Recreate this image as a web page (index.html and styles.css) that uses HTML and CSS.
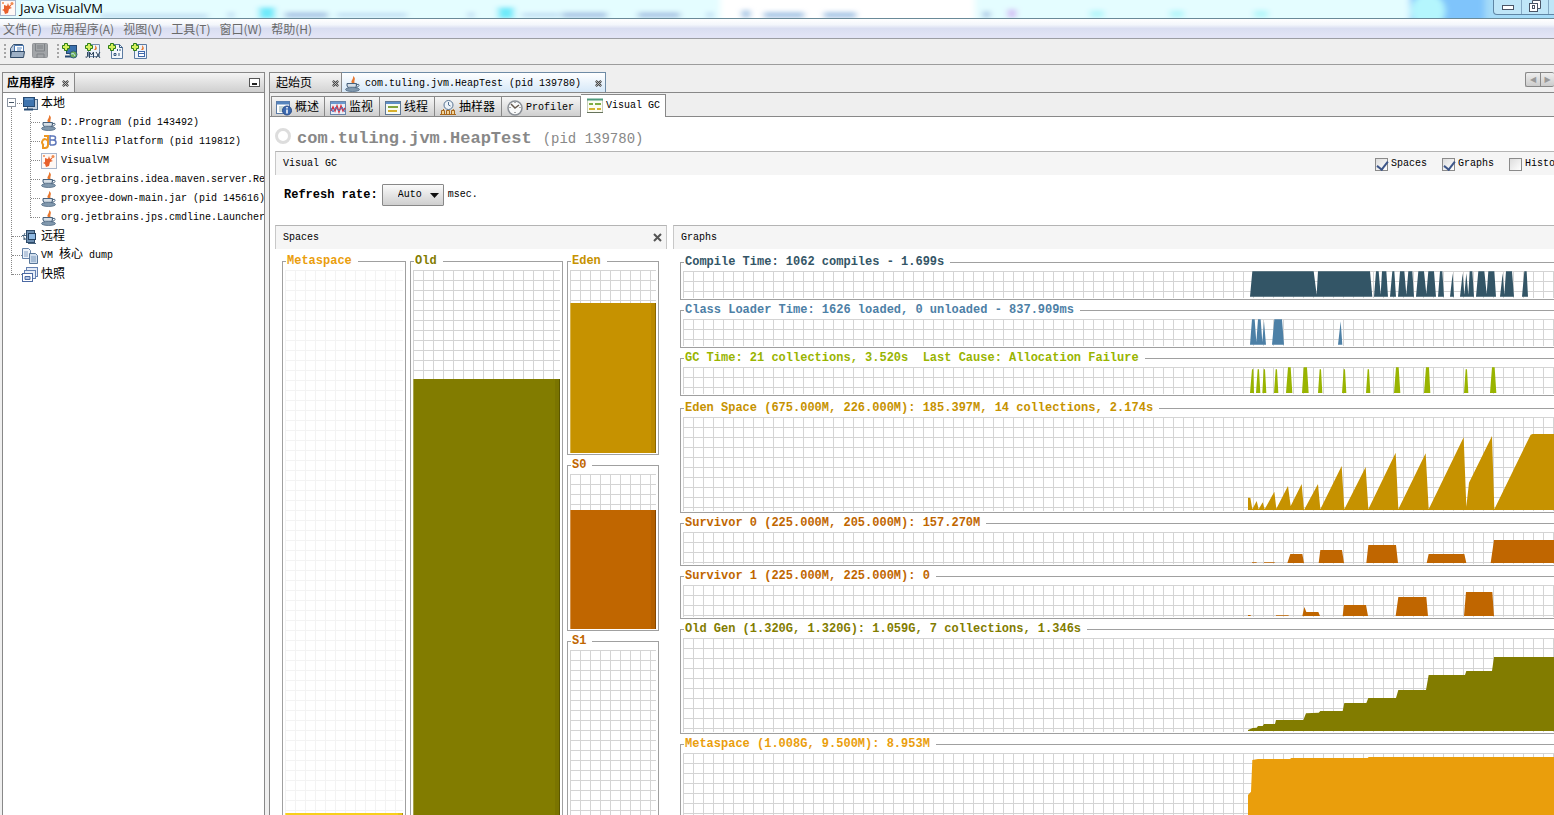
FILE: index.html
```html
<!DOCTYPE html>
<html lang="zh-CN">
<head>
<meta charset="utf-8">
<title>Java VisualVM</title>
<link rel="stylesheet" href="styles.css">
</head>
<body>
<svg class="defs" width="0" height="0" aria-hidden="true">
  <symbol id="java" viewBox="0 0 16 16">
    <path d="M8 8C4 5 9 4 8 0c4 3 0 4 2 8z" fill="#e8772e"/>
    <path d="M2 7.500h9.500v2.500q-1 3-4.700 3T2 10z" fill="#b9c6d2" stroke="#47617c"/>
    <path d="M11.500 8.500q3-.8 2.500 1t-3.500 2" fill="none" stroke="#47617c"/>
    <ellipse cx="7.500" cy="13.500" rx="7" ry="2" fill="#8299ae" stroke="#47617c" stroke-width=".7"/>
    <path d="M3 9h7" stroke="#f4f7fa"/>
  </symbol>
  <symbol id="vvm" viewBox="0 0 16 16">
    <rect x=".5" y=".5" width="15" height="15" fill="#fff8f4" stroke="#a9b6cc"/>
    <path d="M4 5l3 1 1-3 1 3 4-3-3 4 2 1-3 1-1 4-3 1-1-3-2-1 2-1z" fill="#e8602c"/>
    <circle cx="12" cy="3.500" r="1.500" fill="#ef8b50"/><circle cx="3" cy="3" r="1" fill="#ef8b50"/>
  </symbol>
  <symbol id="plus" viewBox="0 0 8 8">
    <path d="M2.500.5h3v2h2v3h-2v2h-3v-2h-2v-3h2z" fill="#d4f05c" stroke="#2d7d17"/>
  </symbol>
  <symbol id="close" viewBox="0 0 8 8">
    <path d="M1 1l6 6M7 1L1 7" stroke="#444" stroke-width="2.600"/><path d="M1 1l6 6M7 1L1 7" stroke="#ddd" stroke-width=".8"/>
  </symbol>
</svg>

<div class="app">
  <header class="titlebar">
    <svg class="glass" aria-hidden="true">
      <defs><filter id="soft" x="-20%" y="-80%" width="140%" height="260%"><feGaussianBlur stdDeviation="3 2"/></filter></defs>
      <rect width="1554" height="18" fill="#fff"/>
      <g filter="url(#soft)">
        <rect x="-10" y="-8" width="730" height="30" fill="#e4fdff"/>
        <rect x="975" y="-8" width="470" height="30" fill="#e4fdff"/>
        <rect x="1410" y="-8" width="90" height="30" fill="#7fc4fb"/>
        <circle cx="1428" cy="11" r="17" fill="#b4f6fd"/>
        <rect x="1485" y="-8" width="100" height="36" fill="#a6dcf8"/>
        <path d="M259 7h16v12h-16zM498 7h16v12h-16z" fill="#6feafa"/>
        <path d="M285 12h43v6h-43zM562 12h45v6h-45zM638 12h42v6h-42zM764 12h40v6h-40zM824 12h32v6h-32zM742 10h8v8h-8zM983 11h7v7h-7z" fill="#aac8e6"/>
        <path d="M100 14h108v4H100zM337 13h70v4h-70zM522 13h38v4h-38zM228 12h6v6h-6zM468 12h6v6h-6zM707 12h6v6h-6z" fill="#bddcf3"/>
        <path d="M1008 9h8v9h-8z" fill="#d3bdf5"/>
        <path d="M1090 10h14v8h-14zM1170 10h14v8h-14zM1254 10h14v8h-14z" fill="#b8f7fb"/>
      </g>
    </svg>
    <svg class="logo" width="16" height="16" aria-hidden="true"><use href="#vvm"/></svg>
    <h1>Java VisualVM</h1>
    <div class="winbtns">
      <button type="button" aria-label="最小化"><svg width="14" height="8"><rect x="1.500" y="3.500" width="11" height="4" fill="#fff" stroke="#4a5566"/></svg></button>
      <button type="button" aria-label="还原"><svg width="12" height="12"><path d="M3.500 3.500v-3h8v8h-3" fill="#fff" stroke="#4a5566"/><rect x=".5" y="3.500" width="8" height="8" fill="#fff" stroke="#4a5566"/><rect x="3.500" y="5.500" width="2" height="3" fill="none" stroke="#4a5566"/></svg></button>
      <button type="button" aria-label="关闭"></button>
    </div>
  </header>

  <nav class="menubar">
    <button type="button">文件(F)</button><button type="button">应用程序(A)</button><button type="button">视图(V)</button><button type="button">工具(T)</button><button type="button">窗口(W)</button><button type="button">帮助(H)</button>
  </nav>

  <div class="toolbar">
    <i class="grip"></i>
    <button type="button" aria-label="打开"><svg width="16" height="16"><path d="M1.500 14.500v-9l3-4h9v5" fill="#b8c8dc" stroke="#35506f"/><path d="M5.500 2.500h9v7h-9z" fill="#fff" stroke="#4a76ad"/><path d="M8 5h5M8 7h4" stroke="#5a8ac4"/><path d="M1.500 14.500l1-6h13l-1 6z" fill="#9db0c6" stroke="#2f4865"/></svg></button>
    <button type="button" class="save" aria-label="保存"><svg width="16" height="16"><rect x=".5" y=".5" width="15" height="14" rx="1" fill="#a2a5a8" stroke="#929598"/><path d="M3.500 1v7h9V1M5 3h6M5 5h6M5 15v-4h7v4" fill="none" stroke="#7e8286"/></svg></button>
    <i class="grip"></i>
    <button type="button" aria-label="添加远程主机"><svg width="16" height="16"><rect x="4.500" y="2.500" width="10" height="8" fill="#3a70ad" stroke="#24466f"/><path d="M3 13.500h8" stroke="#24466f" stroke-width="2"/><circle cx="11.500" cy="11.500" r="3.500" fill="#6fae58" stroke="#2c5d80"/><path d="M9 11q3-2 4 2" stroke="#bfe3f7" fill="none"/><use href="#plus" width="8" height="8"/></svg></button>
    <button type="button" aria-label="添加 JMX 连接"><svg width="16" height="16"><path d="M3.500 1.500h11v12h-11z" fill="#eef4fa" stroke="#7790ad"/><path d="M9 7q2-2 1-5 3 3 1 5" fill="#e8772e"/><path d="M2.500 9v4q0 2-2 1M4.500 15V9l2 3 2-3v6M11 9l4 6M15 9l-4 6" fill="none" stroke="#30475f"/><use href="#plus" width="8" height="8"/></svg></button>
    <button type="button" aria-label="添加 VM 核心 dump"><svg width="16" height="16"><path d="M3.500 1.500h8l3 3v11h-11z" fill="#f4f8fc" stroke="#5b7ba1"/><path d="M11.500 1.500v3h3M6 12.500v-2h2v2zM11 10v3M9.500 6v2M12 6v2" fill="none" stroke="#36597f"/><use href="#plus" width="8" height="8"/></svg></button>
    <button type="button" aria-label="添加快照"><svg width="16" height="16"><path d="M3.500 1.500h12v14h-12z" fill="#eef3fa" stroke="#5b7ba1"/><path d="M10 7q2-2 1-5 3 3 1 5" fill="#e8772e"/><rect x="7.500" y="8.500" width="6" height="5" fill="#fff" stroke="#3f69ab"/><path d="M8 10.500h5" stroke="#3f69ab"/><use href="#plus" width="8" height="8"/></svg></button>
  </div>

  <div class="workspace">
    <aside class="explorer">
      <div class="explorer-head">
        <div class="explorer-tab"><span class="zh">应用程序</span><svg width="7" height="7"><use href="#close"/></svg></div>
        <button type="button" class="minimize" aria-label="最小化窗口"><svg width="11" height="9"><rect x=".5" y=".5" width="10" height="8" fill="#fff" stroke="#555"/><path d="M3 6h5" stroke="#222" stroke-width="2"/></svg></button>
      </div>
      <ul class="tree">
        <li>
          <div class="row root"><i class="expander"></i><svg width="16" height="16"><rect x="5.500" y="3.500" width="10" height="10" fill="#c5d2e0" stroke="#4a6684"/><rect x="1.500" y="1.500" width="11" height="9" fill="#3f74ae" stroke="#264a72"/><path d="M3 3h8" stroke="#89b5df"/><path d="M2 13.500h9" stroke="#264a72" stroke-width="2"/></svg><span class="zh">本地</span></div>
          <ul class="children">
            <li class="row"><svg width="16" height="16"><use href="#java"/></svg>D:.Program (pid 143492)</li>
            <li class="row"><svg width="16" height="16"><path d="M3 2h4v9q0 3-3 3H2v-3M7 9a3 3 0 1 0-4 2" fill="none" stroke="#ed9722" stroke-width="2"/><path d="M9 1v10M9 2h3q2.500 0 2.500 2T12 6H9h3q3 0 3 2.500T12 11H9" fill="none" stroke="#5f78bb" stroke-width="1.500"/></svg>IntelliJ Platform (pid 119812)</li>
            <li class="row"><svg width="16" height="16"><use href="#vvm"/></svg>VisualVM</li>
            <li class="row"><svg width="16" height="16"><use href="#java"/></svg>org.jetbrains.idea.maven.server.Re</li>
            <li class="row"><svg width="16" height="16"><use href="#java"/></svg>proxyee-down-main.jar (pid 145616)</li>
            <li class="row"><svg width="16" height="16"><use href="#java"/></svg>org.jetbrains.jps.cmdline.Launcher</li>
          </ul>
        </li>
        <li class="row root"><svg width="16" height="16"><rect x="4.500" y="1.500" width="8" height="12" fill="#6d8eb0" stroke="#2e4b69"/><rect x="6.500" y="4.500" width="7" height="6" fill="#8fb9e2" stroke="#23405f"/><path d="M0 6.500h4M1 10h4M3 4q-3 3 0 7M6 14.500h8" fill="none" stroke="#49657f"/></svg><span class="zh">远程</span></li>
        <li class="row root"><svg width="16" height="16"><path d="M.5.5h6l2 2v8h-8z" fill="#edf3fa" stroke="#6582a8"/><path d="M2 4h4M2 6h4M2 8h4" stroke="#86a0c2"/><path d="M7.500 5.500h6l2 2v8h-8z" fill="#cfdded" stroke="#587699"/><path d="M9 9h5M9 11h5M9 13h5" stroke="#7d9abc"/></svg><span>VM <span class="zh">核心</span> dump</span></li>
        <li class="row root"><svg width="16" height="16"><rect x="4.500" y=".5" width="11" height="9" fill="#e6edf8" stroke="#6581b2"/><rect x="2.500" y="3.500" width="11" height="8" fill="#e6edf8" stroke="#6581b2"/><rect x=".5" y="6.500" width="10" height="8" fill="#fff" stroke="#4b69a3"/><path d="M3 9.500h5v3H3z" fill="#b5c7e6" stroke="#4b69a3"/></svg><span class="zh">快照</span></li>
      </ul>
    </aside>

    <main class="editor">
      <div class="doc-tabs">
        <div class="doc-tab"><span class="zh">起始页</span><svg width="7" height="7"><use href="#close"/></svg></div>
        <div class="doc-tab current"><svg width="16" height="16"><use href="#java"/></svg><span class="name">com.tuling.jvm.HeapTest (pid 139780)</span><svg width="7" height="7"><use href="#close"/></svg></div>
        <div class="tab-scroll"><button type="button" aria-label="向左">◀</button><button type="button" aria-label="向右">▶</button></div>
      </div>
      <nav class="sub-tabs">
        <button type="button"><svg width="16" height="16"><rect x=".5" y="1.500" width="13" height="12" fill="#fff" stroke="#5a7aa5"/><path d="M1 3h12" stroke="#5584bd" stroke-width="3"/><path d="M3 7h5M3 9h4M3 11h4" stroke="#8aa"/><circle cx="11" cy="10.500" r="4.500" fill="#3b69b0" stroke="#294c88"/><path d="M11 7v1.500M11 9.500v4" stroke="#fff" stroke-width="1.500"/></svg><span class="zh">概述</span></button>
        <button type="button"><svg width="16" height="16"><rect x=".5" y="1.500" width="15" height="13" fill="#e8eef7" stroke="#6983a8"/><path d="M1 3h14" stroke="#6c99cf" stroke-width="2"/><path d="M1 11l2-4 2 4 2-5 2 6 2-6 2 5 2-3" fill="none" stroke="#d83542" stroke-width="1.500"/><path d="M1 8l2 4 3-5 3 4 3-4 3 5" fill="none" stroke="#4c72bd"/></svg><span class="zh">监视</span></button>
        <button type="button"><svg width="16" height="16"><rect x=".5" y="1.500" width="15" height="13" fill="#f7faf2" stroke="#5f7794"/><path d="M1 3h14" stroke="#5e8fc8" stroke-width="2"/><path d="M3 7h10" stroke="#80a43d" stroke-width="2"/><path d="M3 11h9" stroke="#d7af2b" stroke-width="2"/></svg><span class="zh">线程</span></button>
        <button type="button"><svg width="16" height="16"><circle cx="8.500" cy="5" r="4.500" fill="#edf3f9" stroke="#587392"/><path d="M8.500 2v3l2 1" fill="none" stroke="#587392"/><path d="M1.500 14.500v-4h3v4zM6.500 14.500v-4h3v4zM11.500 14.500v-4h3v4zM0 14.500h16M4 9l-2 2M13 9l1 2" fill="#f6d394" stroke="#a8681c"/></svg><span class="zh">抽样器</span></button>
        <button type="button"><svg width="16" height="16"><circle cx="8" cy="8" r="7" fill="#f9fafb" stroke="#8a8f96" stroke-width="1.500"/><path d="M4 4l4 4 4-3" fill="none" stroke="#66594d" stroke-width="1.500"/><path d="M8 2v1M8 12v1M2.500 7.500h1M12.500 7.500h1" stroke="#555"/></svg>Profiler</button>
        <button type="button" class="current"><svg width="16" height="16"><rect x=".5" y="1.500" width="15" height="13" fill="#fdfdf2" stroke="#c6ccbc"/><path d="M0 1.500h16" stroke="#4d9a7c" stroke-width="2"/><path d="M2 6h4M8 6h6" stroke="#7fae43" stroke-width="2"/><path d="M2 11h6M10 11h4" stroke="#d4b52e" stroke-width="2"/><path d="M0 14.500h16" stroke="#66735c"/></svg>Visual GC</button>
      </nav>

      <div class="content">
        <h2 class="heading"><i class="ring"></i><b>com.tuling.jvm.HeapTest</b><span class="pid">(pid 139780)</span></h2>
        <div class="bar options"><span>Visual GC</span>
          <label><input type="checkbox" checked>Spaces</label><label><input type="checkbox" checked>Graphs</label><label><input type="checkbox">Histogram</label>
        </div>
        <div class="refresh">
          <label for="rate">Refresh rate:</label>
          <span class="pick"><select id="rate"><option>Auto</option><option>100</option><option>200</option><option>500</option></select><svg width="9" height="5" aria-hidden="true"><path d="M0 0h9L4.500 5z" fill="#111"/></svg></span>
          <span>msec.</span>
        </div>

        <div class="panels">
          <section class="panel spaces">
            <div class="bar"><span>Spaces</span><button type="button" class="bar-close" aria-label="关闭"><svg width="9" height="9"><path d="M1 1l7 7M8 1L1 8" stroke="#555" stroke-width="2"/></svg></button></div>
            <div class="space-cols">
              <fieldset class="chart meta faint"><legend>Metaspace</legend><div class="plot grow"><div class="fill"></div></div></fieldset>
              <fieldset class="chart old"><legend>Old</legend><div class="plot grow"><div class="fill"></div></div></fieldset>
              <div class="young">
                <fieldset class="chart eden"><legend>Eden</legend><div class="plot"><div class="fill"></div></div></fieldset>
                <fieldset class="chart surv"><legend>S0</legend><div class="plot"><div class="fill"></div></div></fieldset>
                <fieldset class="chart surv last"><legend>S1</legend><div class="plot grow"></div></fieldset>
              </div>
            </div>
          </section>

          <section class="panel graphs">
            <div class="bar"><span>Graphs</span></div>
            <div class="graph-list">
              <fieldset class="chart compile"><legend>Compile Time: 1062 compiles - 1.699s</legend><div class="plot small"><svg><g transform="translate(547 -21) scale(.33333)"><path d="M60 140L67 64H251L260 134L264 64H420L427 140zM432 140L438 64H446L452 134L456 64H469L474 140zM480 140L487 64H493L498 140zM504 140L510 64H523L529 134L535 64H547L552 140zM558 140L565 64H582L589 132L595 64H612L618 140zM624 140L630 64H637L642 140zM660 140L668 70L672 140zM690 140L698 70L703 134L709 70L715 134L719 64H727L732 140zM738 140L745 64H763L770 132L775 64H793L798 140zM810 140L818 70L823 134L828 64H846L852 140zM876 140L883 64H890L894 140z"/></g></svg></div></fieldset>
              <fieldset class="chart loader"><legend>Class Loader Time: 1626 loaded, 0 unloaded - 837.909ms</legend><div class="plot small"><svg><g transform="translate(547 -69) scale(.33333)"><path d="M60 284L66 208H74L79 276L84 208H92L97 276L102 214L108 284zM126 284L133 208H156L162 284zM324 284L332 214L337 284z"/></g></svg></div></fieldset>
              <fieldset class="chart gc"><legend>GC Time: 21 collections, 3.520s&nbsp; Last Cause: Allocation Failure</legend><div class="plot small"><svg><g transform="translate(547 -117) scale(.33333)"><path d="M60 429L66 358H70L72 429zM78 429L83 358H87L91 429zM97 429L101 358H105L109 429zM132 429L137 358H141L145 429zM168 429L174 352H182L187 429zM216 429L221 352H231L236 429zM264 429L269 358H273L277 429zM336 429L341 358H345L349 429zM408 429L413 358H417L421 429zM492 429L498 352H506L511 429zM582 429L588 352H597L601 429zM702 429L707 358H711L715 429zM780 429L786 352H794L799 429z"/></g></svg></div></fieldset>
              <fieldset class="chart eden wide-gap"><legend>Eden Space (675.000M, 226.000M): 185.397M, 14 collections, 2.174s</legend><div class="plot large"><svg><g transform="translate(547 -17) scale(.33333)"><path d="M54 330V293H61L67 328L80 303L86 328L98 307L104 328L133 275L139 326L174 258L182 318L215 252L222 330L264 252L271 328L335 198L343 328L407 201L415 328L497 158L505 328L587 160L596 328L701 112L709 320L717 248L786 108L793 328L902 104L908 102H1500V330z"/></g></svg></div></fieldset>
              <fieldset class="chart surv"><legend>Survivor 0 (225.000M, 205.000M): 157.270M</legend><div class="plot medium"><svg><g transform="translate(547 -132) scale(.33333)"><path d="M66 489v-2h14v2zM102 489v-2h32v2zM172 489L181 462H217L222 489zM266 489L271 450H336L342 489zM409 489L415 435H498L504 489zM590 489L596 462H703L709 489zM782 489L792 420H1500V489z"/></g></svg></div></fieldset>
              <fieldset class="chart surv"><legend>Survivor 1 (225.000M, 225.000M): 0</legend><div class="plot medium"><svg><g transform="translate(547 -185) scale(.33333)"><path d="M54 648v-3h8v3zM138 648v-2h38v2zM217 648L223 621L229 636H265L270 648zM338 648L342 615H408L414 648zM497 648L505 591H589L594 648zM702 648L708 576H787L792 648z"/></g></svg></div></fieldset>
              <fieldset class="chart old"><legend>Old Gen (1.320G, 1.320G): 1.059G, 7 collections, 1.346s</legend><div class="plot large"><svg><g transform="translate(547 -18) scale(.33333)"><path d="M54 333V330L68 324L80 323L84 318H98L102 312H135L138 300H220L228 280L266 278L271 273H338L343 249H409L415 234H498L505 210H588L596 165H705L709 153H786L792 111H1500V333z"/></g></svg></div></fieldset>
              <fieldset class="chart meta"><legend>Metaspace (1.008G, 9.500M): 8.953M</legend><div class="plot large"><svg><g transform="translate(547 -133) scale(.33333)"><path d="M54 700V525L63 515L67 420L84 417H180L184 414H413L416 411H1500V700z"/></g></svg></div></fieldset>
            </div>
          </section>
        </div>
      </div>
    </main>
  </div>
</div>
</body>
</html>
```
FILE: styles.css
```css
* { box-sizing: border-box; }
html, body { margin: 0; height: 100%; overflow: hidden; }
body {
  font: 10px/14px "Liberation Mono", "Noto Sans CJK SC", monospace;
  color: #000;
  background: #efefef;
}
button { margin: 0; padding: 0; border: 0; background: none; font: inherit; color: inherit; }
svg { display: block; flex: none; }
ul { list-style: none; margin: 0; padding: 0; }
h1, h2 { margin: 0; }
.defs { position: absolute; }
.zh { font-size: 12px; }
.app { height: 100vh; display: flex; flex-direction: column; overflow: hidden; }

.titlebar {
  position: relative; display: flex; align-items: flex-start; flex: none;
  height: 19px; overflow: hidden; background: #a6d6f5; border-bottom: 1px solid #6a8a98;
}
.glass { position: absolute; inset: 0; width: 100%; height: 18px; }
.logo { position: relative; margin-right: 4px; }
.titlebar h1 { position: relative; font: 13px/16px "Open Sans", "Noto Sans", sans-serif; }
.winbtns {
  position: relative; display: flex; margin-left: auto; margin-right: -22px; height: 15px;
  border: 1px solid #5f86a5; border-top: 0; border-radius: 0 0 4px 4px; background: #bfe6f8;
}
.winbtns button { width: 27px; display: flex; align-items: center; justify-content: center; padding-bottom: 3px; }
.winbtns button + button { border-left: 1px solid #84a9c4; }

.menubar {
  display: flex; gap: 9px; flex: none; height: 20px; padding-left: 3px;
  background: linear-gradient(#fff, #f3f6fb 30%, #d9def1 50%, #e2e4f6 90%);
  border-bottom: 1px solid #9b9da3;
  font: 12px/19px "Noto Sans CJK SC", sans-serif; color: #6a6a6a;
}

.toolbar { display: flex; align-items: center; gap: 7px; flex: none; height: 26px; padding: 0 0 2px 4px; border-bottom: 1px solid #9c9c9c; background: #efefef; }
.grip { width: 2px; height: 14px; margin-right: -4px; background: repeating-linear-gradient(#a5a5a5 0 2px, transparent 2px 4px); }
.save + .grip { margin-left: 2px; }

.workspace { flex: 1; min-height: 0; display: flex; gap: 4px; padding: 7px 0 0 2px; }

.explorer { width: 263px; flex: none; display: flex; flex-direction: column; overflow: hidden; background: #fff; border: 1px solid #888; border-bottom: 0; }
.explorer-head { display: flex; align-items: center; justify-content: space-between; height: 20px; flex: none; border-bottom: 1px solid #888; background: linear-gradient(#f4f4f4, #cfcfcf); }
.explorer-tab { display: flex; align-items: center; gap: 7px; height: 19px; padding: 2px 5px 0 4px; border-right: 1px solid #888; background: #efefef; font-weight: 700; }
.minimize { margin-right: 4px; }

.row { position: relative; display: flex; align-items: center; gap: 4px; height: 19px; white-space: nowrap; }
.root { padding-left: 19px; gap: 3px; }
.root::before { content: ""; position: absolute; left: 9px; top: 9px; width: 10px; border-top: 1px dotted #888; }
.tree { position: relative; padding-top: 1px; }
.tree::before { content: ""; position: absolute; left: 8px; top: 14px; bottom: 9px; border-left: 1px dotted #888; }
.expander { position: absolute; z-index: 1; left: 4px; top: 4px; width: 9px; height: 9px; border: 1px solid #8d96a3; background: linear-gradient(#456, #456) center / 5px 1px no-repeat #fff; }
.children { position: relative; padding-left: 38px; }
.children::before { content: ""; position: absolute; left: 27px; top: 0; bottom: 9px; border-left: 1px dotted #888; }
.children .row::before { content: ""; position: absolute; left: -10px; top: 9px; width: 9px; border-top: 1px dotted #888; }

.editor { flex: 1; min-width: 0; display: flex; flex-direction: column; border-left: 1px solid #888; }
.doc-tabs { display: flex; flex: none; height: 21px; border-bottom: 1px solid #888; }
.doc-tab { display: flex; align-items: center; height: 20px; width: 72px; padding: 2px 2px 0 6px; justify-content: space-between; border: 1px solid #888; border-left: 0; border-bottom: 0; background: linear-gradient(#f6f6f6, #d4d4d4); }
.doc-tab.current { width: 264px; padding: 2px 3px 0; justify-content: flex-start; gap: 4px; background: linear-gradient(#fff, #d6e8f8); border-color: #6e8ba5; }
.doc-tab .name { flex: 1; white-space: nowrap; }
.tab-scroll { display: flex; margin-left: auto; height: 15px; border: 1px solid #888; border-right: 0; border-radius: 2px; background: linear-gradient(#eee, #ccc); color: #999; }
.tab-scroll button { width: 14px; font: 8px/13px "DejaVu Sans", sans-serif; }
.tab-scroll button + button { border-left: 1px solid #888; }

.sub-tabs { display: flex; align-items: flex-end; flex: none; height: 24px; border-bottom: 1px solid #888; padding-left: 1px; }
.sub-tabs button { display: flex; align-items: center; gap: 3px; height: 20px; padding: 2px 6px 0 5px; border: 1px solid #888; border-left: 0; border-bottom: 0; background: linear-gradient(#f6f6f6, #cfcfcf); }
.sub-tabs button:first-child { border-left: 1px solid #888; padding: 2px 5px 0 4px; }
.sub-tabs button.current { height: 23px; margin-bottom: -1px; background: #fff; padding: 0 5px 1px 6px; }

.content { flex: 1; min-height: 0; display: flex; flex-direction: column; background: #fff; padding-left: 5px; overflow: hidden; }
.heading { display: flex; align-items: center; flex: none; height: 34px; padding-top: 9px; color: #888; font-size: 17px; line-height: 20px; font-weight: 400; white-space: nowrap; }
.ring { width: 16px; height: 16px; border: 3px solid #ddd; border-radius: 50%; margin: 0 6px 6px 0; }
.pid { font-size: 14px; margin-left: 11px; }

.bar { display: flex; align-items: center; flex: none; height: 24px; padding-left: 7px; background: #f5f5f5; border-top: 1px solid #b4b4b4; border-left: 1px solid #c8c8c8; }
.options { margin-right: -32px; gap: 15px; padding-top: 1px; }
.options > span { margin-right: auto; }
.options label { display: flex; align-items: center; gap: 3px; }
.options label:last-child { padding-right: 7px; }
.options input {
  appearance: none; width: 13px; height: 13px; margin: 0; border: 1px solid #8a8a8a; background: linear-gradient(135deg, #ddd, #fff); position: relative;
}
.options input:checked::after { content: ""; position: absolute; left: 3px; top: 0; width: 5px; height: 9px; border: solid #3d5689; border-width: 0 2px 2px 0; transform: rotate(38deg); }

.refresh { display: flex; align-items: center; gap: 4px; flex: none; height: 40px; padding-left: 9px; margin-bottom: 10px; }
.refresh label { font-size: 12px; font-weight: 700; }
.pick { position: relative; display: flex; }
.pick select { appearance: none; width: 62px; height: 22px; padding: 0 0 0 15px; border: 1px solid #888; border-radius: 1px; font: inherit; color: #000; background: linear-gradient(#fafafa, #cfcfcf); }
.pick svg { position: absolute; right: 5px; top: 9px; pointer-events: none; }

.panels { flex: 1; min-height: 0; display: flex; gap: 6px; }
.panel { display: flex; flex-direction: column; min-height: 0; }
.spaces { width: 392px; flex: none; }
.spaces > .bar { border-right: 1px solid #c8c8c8; justify-content: space-between; padding-right: 4px; }
.graphs { flex: 1; min-width: 0; }
.space-cols { flex: 1; min-height: 0; display: flex; gap: 4px; padding: 5px 8px 0 7px; }
.young { flex: none; width: 92px; display: flex; flex-direction: column; gap: 3px; min-height: 0; }

.chart { display: flex; flex-direction: column; min-width: 0; margin: 0; padding: 2px 2px 1px; border: 1px solid #a0a0a0; color: var(--tone); --line: #d4d4d4; }
.chart legend { margin-left: 1px; padding: 0 6px 0 1px; font-size: 12px; line-height: 14px; height: 14px; font-weight: 700; white-space: nowrap; }
.plot { position: relative; overflow: hidden; display: flex; flex-direction: column; justify-content: flex-end; background: repeating-linear-gradient(90deg, var(--line) 0 1px, transparent 1px 10px), repeating-linear-gradient(var(--line) 0 1px, transparent 1px 10px); }
.plot svg { width: 100%; height: 100%; fill: var(--tone); }
.fill { background: var(--tone); border-right: 1px solid rgba(0,0,0,.3); border-left: 1px solid rgba(255,255,255,.3); box-shadow: inset -4px 0 rgba(0,0,0,.06); }
.faint { --line: #f3f3f3; }

.compile { --tone: #335566; }
.loader { --tone: #4d80a6; }
.gc { --tone: #99b400; }
.eden { --tone: #c69200; }
.surv { --tone: #c06600; }
.old { --tone: #827c00; }
.meta { --tone: #ea9e0c; }

.space-cols > .meta { width: 124px; }
.space-cols > .old { width: 153px; }
.space-cols > .chart, .last { border-bottom: 0; padding-bottom: 0; }
.space-cols > .chart .plot { height: calc(100vh - 270px); }
.space-cols > .meta .fill { height: 2px; background: #f7cf1a; }
.space-cols > .old .fill { height: calc(100% - 109px); }
.young .eden .plot { height: 183px; }
.young .eden .fill { height: 150px; }
.young .surv .plot { height: 155px; }
.young .surv .fill { height: 119px; }
.young .last { flex: 1; }
.young .last .plot { height: calc(100vh - 650px); }

.graph-list { flex: 1; min-height: 0; display: flex; flex-direction: column; gap: 3px; padding: 6px 0 0 7px; overflow: hidden; }
.graph-list .chart { flex: none; border-right: 0; padding-right: 0; }
.wide-gap { margin-top: 2px; }
.small { height: 27px; }
.medium { height: 32px; }
.large { height: 94px; }
```
